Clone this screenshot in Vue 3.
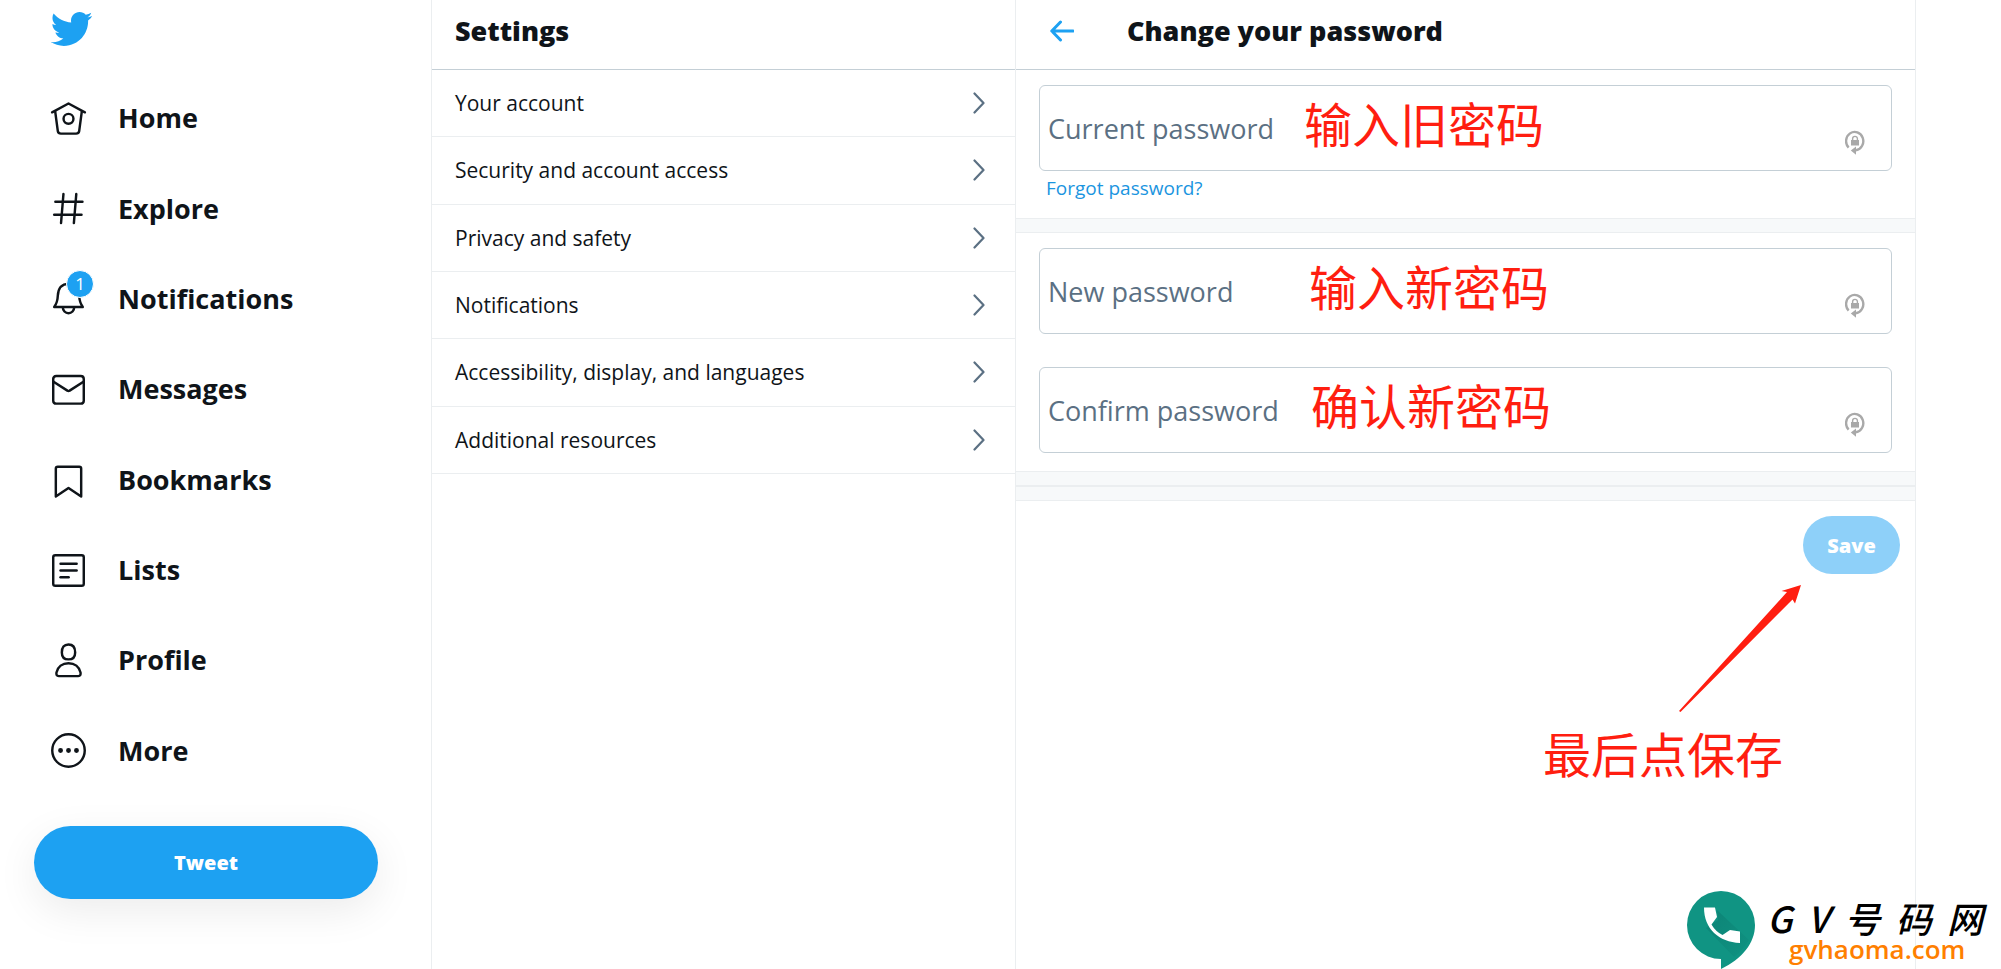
<template>
  <div class="page">
    <aside class="sidebar">
      <a href="#" class="logo" aria-label="Twitter">
        <svg viewBox="0 0 24 24">
          <path d="M23.643 4.937c-.835.37-1.732.62-2.675.733.962-.576 1.7-1.49 2.048-2.578-.9.534-1.897.922-2.958 1.13-.85-.904-2.06-1.47-3.4-1.47-2.572 0-4.658 2.086-4.658 4.66 0 .364.042.718.12 1.06-3.873-.195-7.304-2.05-9.602-4.868-.4.69-.63 1.49-.63 2.342 0 1.616.823 3.043 2.072 3.878-.764-.025-1.482-.234-2.11-.583v.06c0 2.257 1.605 4.14 3.737 4.568-.392.106-.803.162-1.227.162-.3 0-.593-.028-.877-.082.593 1.85 2.313 3.198 4.352 3.234-1.595 1.25-3.604 1.995-5.786 1.995-.376 0-.747-.022-1.112-.065 2.062 1.323 4.51 2.093 7.14 2.093 8.57 0 13.255-7.098 13.255-13.254 0-.2-.005-.402-.014-.602.91-.658 1.7-1.477 2.323-2.41z" />
        </svg>
      </a>
      <nav class="nav">
        <a v-for="item in navItems" :key="item.label" href="#" class="nav-item">
          <span class="nav-icon">
            <svg viewBox="0 0 24 24">
              <path v-for="d in item.paths" :key="d" :d="d" />
              <path v-if="item.dots" class="dots" :d="item.dots" />
            </svg>
            <span v-if="item.badge" class="badge">{{ item.badge }}</span>
          </span>
          <span>{{ item.label }}</span>
        </a>
      </nav>
      <button type="button" class="tweet-btn">Tweet</button>
    </aside>

    <section class="settings">
      <header class="col-header">
        <h2>Settings</h2>
      </header>
      <div class="settings-list">
        <a v-for="entry in settings" :key="entry" href="#" class="settings-item">
          <span>{{ entry }}</span>
          <svg class="chevron" viewBox="0 0 12 22">
            <path d="M1.5 1.5L10.5 11L1.5 20.5" />
          </svg>
        </a>
      </div>
    </section>

    <main class="detail">
      <header class="col-header">
        <button type="button" class="back-btn" aria-label="Back">
          <svg viewBox="0 0 24 22">
            <path d="M23 11H2M10.5 2L1.8 11L10.5 20" />
          </svg>
        </button>
        <h2>Change your password</h2>
      </header>

      <form @submit.prevent>
        <div v-for="(group, i) in groups" :key="i" class="group">
          <div v-for="field in group" :key="field.id" class="field-wrap">
            <div class="field">
              <input
                :id="field.id"
                v-model="form[field.id]"
                type="password"
                :placeholder="field.label"
                :aria-label="field.label"
              />
              <svg class="lock" viewBox="0 0 20 25">
                <path class="ring" d="M3.6 17.6A8.6 9.2 0 1 1 11 20.2" />
                <path class="shackle" d="M7.6 10.5V8.8a2.4 2.4 0 0 1 4.8 0v1.7" />
                <path class="solid" d="M6 10h8v5.5H6zM5.8 20.6L11 16.6V24.8z" />
              </svg>
              <span class="note" :class="field.id">{{ field.note }}</span>
            </div>
            <a v-if="field.link" href="#" class="forgot">{{ field.link }}</a>
          </div>
        </div>
        <div class="band"></div>
        <div class="actions">
          <button type="submit" class="save-btn" :disabled="!form.current">Save</button>
          <div class="save-note">
            <svg viewBox="0 0 122 127">
              <path d="M122 0L116 18.500L113.500 14.500L1.500 127L0 126L108 7L102.500 6z" />
            </svg>
            <span>最后点保存</span>
          </div>
        </div>
      </form>
    </main>

    <div class="watermark">
      <svg class="bubble" viewBox="0 0 68 78">
        <defs>
          <linearGradient id="bubbleShade" x1="0" y1="0" x2="1" y2="1">
            <stop offset="0" stop-color="#0b7a6e" />
            <stop offset="1" stop-color="#0f9080" />
          </linearGradient>
        </defs>
        <path fill="#109483" d="M34 0A34 34 0 0 1 68 34C68 52 55 68 34 78V68A34 34 0 0 1 34 0z" />
        <path fill="url(#bubbleShade)" d="M30 19L62 49Q56 59 47 66L19 37L31 29z" opacity=".6" />
        <path fill="#fff" d="M17 16.500h11l2 9.500-5.500 7.500q4 7 11 10.500L43 39l10 1.500v11.500C32 51 17 38 17 16.500z" />
      </svg>
      <div class="brand">
        <div class="brand-name">
          <span v-for="ch in brand" :key="ch">{{ ch }}</span>
        </div>
        <div class="brand-url">gvhaoma.com</div>
      </div>
    </div>
  </div>
</template>

<script setup>
import { reactive } from 'vue'

const navItems = [
  {
    label: 'Home',
    paths: [
      'M1.900 8.200L12 2.800L22.100 8.200',
      'M3.800 7.600L5.450 19.900Q5.700 21.300 7.360 21.300H16.640Q18.300 21.300 18.550 19.900L20.200 7.600',
      'M12 9.150a3.050 3.050 0 1 0 0 6.100a3.050 3.050 0 1 0 0-6.100'
    ]
  },
  {
    label: 'Explore',
    paths: ['M8.900 3L7.400 21', 'M16.800 3L15.300 21', 'M3.900 7.900H20.600', 'M3.200 15.900H20']
  },
  {
    label: 'Notifications',
    badge: 1,
    paths: [
      'M3.200 17.200C4.700 15.200 5.300 13.500 5.400 10.500C5.600 5.600 7.900 3 12 3C16.100 3 18.400 5.600 18.600 10.500C18.700 13.500 19.300 15.200 20.800 17.200z',
      'M8.500 17.400a3.500 3.700 0 0 0 7 0'
    ]
  },
  {
    label: 'Messages',
    paths: [
      'M4.500 3.700H19.500Q21.400 3.700 21.400 5.600V18.900Q21.400 20.700 19.500 20.700H4.500Q2.600 20.700 2.600 18.900V5.600Q2.600 3.700 4.500 3.700z',
      'M2.800 7.200L11.300 12.700Q12 13.100 12.700 12.700L21.200 7.200'
    ]
  },
  {
    label: 'Bookmarks',
    paths: ['M4.200 22.500V5.300Q4.200 4.100 5.400 4.100H18.600Q19.800 4.100 19.800 5.300V22.500L12 17.200z']
  },
  {
    label: 'Lists',
    paths: [
      'M3.900 2.600H20.100Q21.400 2.600 21.400 3.900V20.100Q21.400 21.400 20.100 21.400H3.900Q2.600 21.400 2.600 20.100V3.900Q2.600 2.600 3.900 2.600z',
      'M7.100 7.900H17',
      'M7.100 12H17',
      'M7.100 16.100H12.100'
    ]
  },
  {
    label: 'Profile',
    paths: [
      'M12 2.100C14.800 2.100 16.100 4 16.100 7C16.100 10 14.600 11.300 12 11.300C9.400 11.300 7.900 10 7.900 7C7.900 4 9.200 2.100 12 2.100z',
      'M12 13.700C15.800 13.700 18.600 16 19.400 19.400Q19.800 21.600 18 21.600H6Q4.200 21.600 4.600 19.400C5.400 16 8.200 13.700 12 13.700z'
    ]
  },
  {
    label: 'More',
    paths: ['M12 2a10 10 0 1 0 0 20a10 10 0 1 0 0-20'],
    dots: 'M7.100 12h.01M12 12h.01M16.900 12h.01'
  }
]

const settings = [
  'Your account',
  'Security and account access',
  'Privacy and safety',
  'Notifications',
  'Accessibility, display, and languages',
  'Additional resources'
]

const groups = [
  [{ id: 'current', label: 'Current password', note: '输入旧密码', link: 'Forgot password?' }],
  [
    { id: 'fresh', label: 'New password', note: '输入新密码' },
    { id: 'confirm', label: 'Confirm password', note: '确认新密码' }
  ]
]

const brand = ['G', 'V', '号', '码', '网']

const form = reactive({ current: '', fresh: '', confirm: '' })
</script>

<style>
body {
  background: #fff;
}
</style>

<style scoped>
.page {
  position: relative;
  display: grid;
  grid-template-columns: 432fr 583fr 901fr 85fr;
  min-height: 100vh;
  overflow: hidden;
  font-family: "Open Sans", "Noto Sans", "Noto Sans CJK SC", sans-serif;
  color: #0f1419;
}

.page *,
.page *::after {
  box-sizing: border-box;
}

a {
  color: inherit;
  text-decoration: none;
}

button,
input {
  font-family: inherit;
  border: none;
  background: none;
  padding: 0;
}

button {
  cursor: pointer;
}

svg {
  display: block;
  flex-shrink: 0;
}

/* Sidebar */
.sidebar {
  display: flex;
  flex-direction: column;
  padding: 7px 53px 70px 34px;
  border-right: 1px solid #ebeef0;
}

.logo {
  margin-left: 15px;
  width: 44px;
}

.logo svg {
  width: 44px;
  height: 44px;
  fill: #1da1f2;
}

.nav {
  flex: 1;
  display: grid;
  grid-auto-rows: 1fr;
  margin: 22px 0 30px;
}

.nav-item {
  display: flex;
  align-items: center;
  gap: 30px;
  padding-left: 15px;
  font-size: 27px;
  line-height: 36px;
  font-weight: 700;
}

.nav-icon {
  position: relative;
}

.nav-icon svg {
  width: 39px;
  height: 39px;
  fill: none;
  stroke: #0f1419;
  stroke-width: 1.5;
  stroke-linecap: round;
  stroke-linejoin: round;
}

.nav-icon .dots {
  stroke-width: 3;
}

.badge {
  position: absolute;
  top: -9px;
  right: -6px;
  width: 28px;
  height: 28px;
  border: 1px solid #fff;
  border-radius: 50%;
  background: #1da1f2;
  color: #fff;
  font-size: 17px;
  line-height: 26px;
  font-weight: 400;
  text-align: center;
}

.tweet-btn {
  height: 73px;
  border-radius: 37px;
  background: #1da1f2;
  color: #fff;
  font-size: 20px;
  font-weight: 800;
  box-shadow: 0 12px 42px rgba(0, 0, 0, 0.08);
}

/* Column headers */
.col-header {
  display: flex;
  align-items: center;
  height: 70px;
  padding: 0 23px 8px;
  border-bottom: 1px solid #c4cfd6;
}

.col-header h2 {
  margin: 0;
  font-size: 27px;
  line-height: 36px;
  font-weight: 800;
}

/* Settings list */
.settings-list {
  display: grid;
  grid-auto-rows: 1fr;
  min-height: 404px;
}

.settings-item {
  display: flex;
  align-items: center;
  justify-content: space-between;
  padding: 0 30px 0 23px;
  border-bottom: 1px solid #ebeef0;
  font-size: 21px;
  line-height: 30px;
}

.chevron {
  width: 12px;
  height: 22px;
  fill: none;
  stroke: #5b7083;
  stroke-width: 2.2;
  stroke-linecap: round;
  stroke-linejoin: round;
}

/* Password form */
.detail {
  border-left: 1px solid #ebeef0;
  border-right: 1px solid #ebeef0;
}

.back-btn {
  margin: 0 53px 0 11px;
}

.back-btn svg {
  width: 24px;
  height: 22px;
  fill: none;
  stroke: #1da1f2;
  stroke-width: 3;
  stroke-linecap: round;
  stroke-linejoin: round;
}

.group {
  display: flex;
  flex-direction: column;
  gap: 33px;
  padding: 15px 23px 0;
}

.group::after,
.band {
  content: "";
  height: 15px;
  border: solid #ebeef0;
  border-width: 1px 0;
  background: #f7f9fa;
}

.group::after {
  margin: -15px -23px 0;
}

.field {
  position: relative;
  display: flex;
  align-items: flex-end;
  height: 86px;
  padding: 0 26px 15px 0;
  border: 1px solid #c4cfd6;
  border-radius: 6px;
}

.field input {
  flex: 1;
  height: 84px;
  margin-bottom: -15px;
  padding: 0 8px;
  outline: none;
  color: #0f1419;
  font-size: 27px;
}

.field input::placeholder {
  color: #5b7083;
  opacity: 1;
}

.lock {
  width: 20px;
  height: 25px;
}

.lock path {
  fill: none;
  stroke: #a9a9a9;
  stroke-width: 2.4;
}

.lock .shackle {
  stroke-width: 1.4;
}

.lock .solid {
  fill: #a9a9a9;
  stroke: none;
}

.forgot {
  display: block;
  padding: 5px 7px 0;
  color: #1b95e0;
  font-size: 19px;
  line-height: 24px;
}

/* Red notes laid over the form */
.note,
.save-note {
  position: absolute;
  color: #ff1e10;
  font-family: "Noto Sans CJK SC", sans-serif;
  font-size: 48px;
  line-height: 56px;
  white-space: nowrap;
  pointer-events: none;
}

.note {
  top: 8px;
  left: 264px;
}

.note.fresh {
  left: 269px;
}

.note.confirm {
  left: 271px;
}

.actions {
  position: relative;
  display: flex;
  justify-content: flex-end;
  padding: 15px;
}

.save-btn {
  width: 97px;
  height: 58px;
  border-radius: 29px;
  background: #8ed0f9;
  color: #fff;
  font-size: 20px;
  font-weight: 800;
}

.save-note {
  top: 84px;
  right: 114px;
}

.save-note svg {
  width: 122px;
  height: 127px;
  margin: 0 0 12px 136px;
  fill: #ff1e10;
}

.save-note span {
  display: block;
}

/* Site mark in the corner */
.watermark {
  position: absolute;
  right: 18px;
  bottom: 0;
  display: flex;
  gap: 12px;
}

.bubble {
  width: 68px;
  height: 78px;
}

.brand {
  width: 216px;
  padding-top: 7px;
}

.brand-name {
  display: flex;
  justify-content: space-between;
  color: #000;
  font-family: "Noto Sans CJK SC", sans-serif;
  font-size: 36px;
  line-height: 38px;
  font-style: italic;
  font-weight: 500;
}

.brand-url {
  margin-left: 22px;
  color: #ff7f00;
  font-size: 26px;
  line-height: 26px;
  font-weight: 600;
}
</style>
